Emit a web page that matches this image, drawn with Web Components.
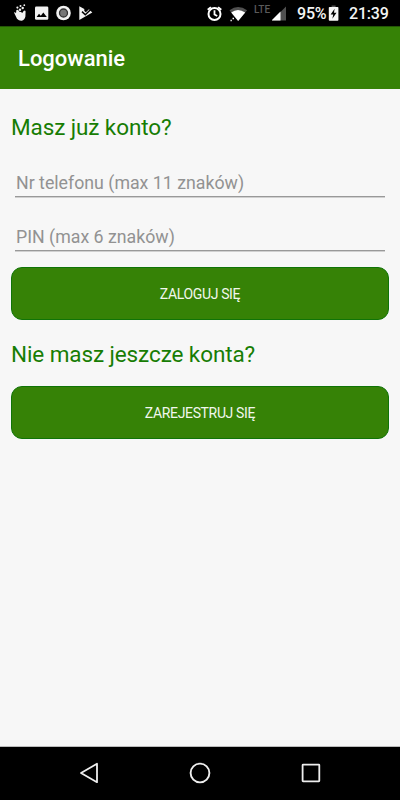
<!DOCTYPE html>
<html lang="pl"><head><meta charset="utf-8"><title>Logowanie</title>
<style>html,body{margin:0;height:100%;background:#f7f7f7;font-family:Roboto,"Noto Sans",sans-serif}</style></head>
<body>
<login-screen></login-screen>
<script>
const define = (name, html) => customElements.define(name, class extends HTMLElement {
  constructor() {
    super();
    this.attachShadow({mode: 'open'}).innerHTML = html;
  }
});

define('status-bar', `<style>
:host{display:flex;height:26px;background:#000;color:#fff}
svg{display:block;flex:none}
span{display:block;white-space:nowrap;line-height:28px;height:26px;font-size:16px;letter-spacing:-.2px;font-weight:500;color:#f4f4f4}
.sp{flex:1}
.lte{font-size:10px;line-height:20px;color:#5a5a5a;width:18px;margin-left:1px;letter-spacing:.1px}
.pct{margin-left:8px;width:31px}
.time{width:40px;margin:0 11px 0 8px}
</style>
<svg width="110" height="26" viewBox="0 0 110 26" fill="#f2f2f2">
<path d="M14 12.4q1.2-.4 2 .8l.4-3.2q1.4-.8 2.2.6l.8 1.2 1.6.2 1.3 1 1.3-2q1.6-1.2 2 .6l-.2 5q-.6 3.6-3.8 4.2-2.6.2-4.6-2z"/>
<circle cx="17.4" cy="7.6" r="1.1"/><circle cx="20" cy="9.8" r="1.2"/><circle cx="20.5" cy="6" r="1"/><circle cx="22.7" cy="8" r="1.2"/><circle cx="24.3" cy="5.2" r=".9"/>
<rect x="35" y="6.5" width="13.3" height="13.2" rx="1.3"/><path fill="#000" d="M36.6 17l2.4-3.2 1.8 2 2.5-3.3 3.5 4.5z"/>
<circle cx="63.5" cy="13" r="7.3"/><circle cx="63.5" cy="13" r="4" fill="#777" stroke="#333" stroke-width="1.3"/>
<path d="M79.3 6.2l5 2.8v2l1.5 1.2 3.2-3 3.3 3.3L79.3 20z"/><path d="M82 11.6l3.3 3.2 5.7-5.5" fill="none" stroke="#000" stroke-width="1.5"/>
</svg>
<div class="sp"></div>
<svg width="54" height="26" viewBox="199 0 54 26">
<circle cx="214.5" cy="14" r="6" fill="none" stroke="#fff" stroke-width="2"/>
<path d="M214.5 10.2v4.2l2.7 1.7M207.7 9.8l3.2-2.7M221.3 9.8l-3.2-2.7" fill="none" stroke="#fff" stroke-width="1.8"/>
<path d="M229.5 10.3q8.5-6.5 17.6 0L238 21z" fill="#505050"/>
<path d="M231.2 12.5q6.6-5 14 0L238.2 21z" fill="#fff"/>
<path d="M230.5 20.5h1.3M232.5 18.5h1.5" stroke="#fff" stroke-width="1.3"/>
</svg>
<span class="lte">LTE</span>
<svg width="17" height="26" viewBox="272 0 17 26"><path d="M272 20.5L286 6.5v14z" fill="#505050"/><path d="M271.5 20.5l9-9v9z" fill="#fff"/></svg>
<span class="pct">95%</span>
<svg width="13" height="26" viewBox="328 0 13 26"><path d="M331.6 5.5h4v1.8h-4z" fill="#555"/><rect x="328.8" y="7" width="9.6" height="13.7" rx=".8" fill="#f7f7f7"/><path d="M334.6 8.7l-4 5.7h2.6l-.8 4.4 4.1-6h-2.5z" fill="#000"/></svg>
<span class="time">21:39</span>`);

define('app-bar', `<style>
:host{display:flex;align-items:center;height:63px;box-sizing:border-box;padding:2px 18px 0;background:#368206;color:#fff;border-top:1px solid #245606;font-size:22px;font-weight:500;line-height:28px}
</style><slot></slot>`);

define('section-title', `<style>
:host{display:block;height:30px;line-height:30px;font-size:22.5px;letter-spacing:-.1px;color:#177d04;white-space:nowrap}
</style><slot></slot>`);

define('text-field', `<style>
:host{display:block;margin:0 4px;padding:1px 0 0 1px;height:27px;box-sizing:border-box;border-bottom:1px solid #999;box-shadow:0 1px #d0d0d0;font-size:17.75px;line-height:24px;color:#929292;white-space:nowrap}
</style><slot></slot>`);

define('action-button', `<style>
:host{display:flex;align-items:center;justify-content:center;height:53px;box-sizing:border-box;border:1px solid #107407;border-radius:11px;background:#368206;color:#f1f7ed;font-size:14px;letter-spacing:-.35px;line-height:20px;padding-top:1px}
</style><slot></slot>`);

define('nav-bar', `<style>
:host{display:flex;justify-content:space-between;align-items:center;height:54px;box-sizing:border-box;background:#000;border-top:1px solid #bbb;padding:0 78px 1px}
svg{display:block}
</style>
<svg width="22" height="24" viewBox="0 0 22 24" fill="none" stroke="#eee" stroke-width="1.8"><path stroke-linejoin="round" d="M3 12L19 2.8v18.4z"/></svg>
<svg width="24" height="24" viewBox="0 0 24 24" fill="none" stroke="#eee" stroke-width="1.9"><circle cx="12" cy="12" r="9.4"/></svg>
<svg width="22" height="24" viewBox="0 0 22 24" fill="none" stroke="#eee" stroke-width="1.8"><rect x="2.6" y="3.6" width="16.7" height="16.7" rx=".5"/></svg>`);

define('login-screen', `<style>
:host{display:flex;flex-direction:column;height:800px;width:400px;background:#f7f7f7;overflow:hidden}
main{flex:1;padding:23px 11px 0}
.a{margin-top:28px}.b{margin-top:27px}.c{margin-top:16px}.d{margin-top:19px}.e{margin-top:17px}
</style>
<status-bar></status-bar>
<app-bar>Logowanie</app-bar>
<main>
<section-title>Masz już konto?</section-title>
<text-field class="a">Nr telefonu (max 11 znaków)</text-field>
<text-field class="b">PIN (max 6 znaków)</text-field>
<action-button class="c">ZALOGUJ SIĘ</action-button>
<section-title class="d">Nie masz jeszcze konta?</section-title>
<action-button class="e">ZAREJESTRUJ SIĘ</action-button>
</main>
<nav-bar></nav-bar>`);
</script>
</body></html>
